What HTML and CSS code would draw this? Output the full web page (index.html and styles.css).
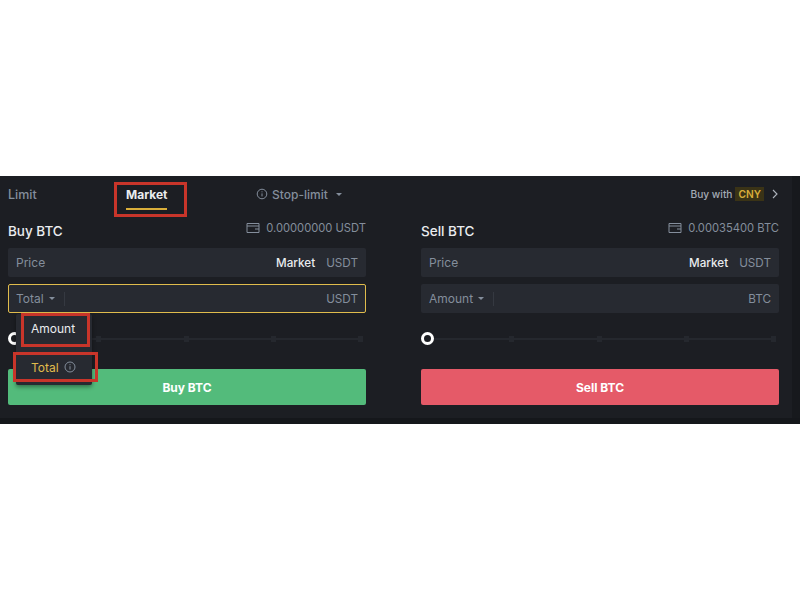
FILE: index.html
```html
<!DOCTYPE html>
<html lang="en">
<head>
<meta charset="utf-8">
<title>Spot trade</title>
<link rel="stylesheet" href="styles.css">
</head>
<body>
<main class="panel">
  <nav class="tabs">
    <span class="tab tab-limit">Limit</span>
    <span class="tab tab-market">Market<i class="underline"></i><i class="mark mark-market"></i></span>
    <span class="tab tab-stop">
      <svg class="icon" width="12" height="12" viewBox="0 0 12 12"><circle cx="6" cy="6" r="4.8" fill="none" stroke="#848e9c"/><path d="M6 3.4v.9M6 5.4v3" stroke="#848e9c"/></svg>
      Stop-limit<i class="caret"></i>
    </span>
    <span class="buywith">Buy with <b class="cny">CNY</b>
      <svg width="8" height="10" viewBox="0 0 8 10"><path d="M2 1l4 4-4 4" fill="none" stroke="#aeb4bc" stroke-width="1.1"/></svg>
    </span>
  </nav>
  <div class="columns">
    <section class="col">
      <header class="col-head">
        <h2>Buy BTC</h2>
        <span class="balance">
          <svg class="wallet" width="14" height="12" viewBox="0 0 14 12"><path d="M1 1.5h12v9H1zM1 4h12M9 7h4" fill="none" stroke="#848e9c"/></svg>
          0.00000000 USDT
        </span>
      </header>
      <div class="field"><span>Price</span><span class="right"><b>Market</b>USDT</span></div>
      <div class="field active"><span class="select">Total<i class="caret"></i></span><i class="sep"></i><span class="right">USDT</span></div>
      <div class="slider"><span class="track"><i></i><i></i><i></i><i></i></span><i class="knob"></i></div>
      <button class="btn buy">Buy BTC</button>
      <div class="menu">
        <div class="menu-item item-amount">Amount</div>
        <div class="menu-item item-total">Total
          <svg width="12" height="12" viewBox="0 0 12 12"><circle cx="6" cy="6" r="5" fill="none" stroke="#848e9c"/><path d="M6 3.2v1M6 5.2v3.4" stroke="#848e9c"/></svg>
        </div>
      </div>
      <i class="mark mark-amount"></i>
      <i class="mark mark-total"></i>
    </section>
    <section class="col">
      <header class="col-head">
        <h2>Sell BTC</h2>
        <span class="balance">
          <svg class="wallet" width="14" height="12" viewBox="0 0 14 12"><path d="M1 1.5h12v9H1zM1 4h12M9 7h4" fill="none" stroke="#848e9c"/></svg>
          0.00035400 BTC
        </span>
      </header>
      <div class="field"><span>Price</span><span class="right"><b>Market</b>USDT</span></div>
      <div class="field"><span class="select">Amount<i class="caret"></i></span><i class="sep"></i><span class="right">BTC</span></div>
      <div class="slider"><span class="track"><i></i><i></i><i></i><i></i></span><i class="knob"></i></div>
      <button class="btn sell">Sell BTC</button>
    </section>
  </div>
</main>
</body>
</html>
```
FILE: styles.css
```css
* { box-sizing: border-box; }
html, body { margin: 0; padding: 0; background: #fff; }
body { height: 600px; padding-top: 176px; font-family: Inter, "Liberation Sans", sans-serif; color: #848e9c; }
i { display: block; font-style: normal; }
.panel { height: 248px; background: #1c1e23; padding: 0 21px 0 8px; border-bottom: 6px solid #15171b; box-shadow: inset -8px 0 0 #17191d; }
.tabs { height: 36px; display: flex; align-items: center; font-size: 12px; font-weight: 500; }
.tab-limit { width: 118px; font-size: 12.5px; }
.tab-market { color: #eaecef; font-weight: 700; width: 130px; position: relative; }
.underline { position: absolute; left: 0; top: 21px; width: 41px; height: 2px; background: #d9ae3a; }
.tab-stop { display: flex; align-items: center; gap: 4px; }
.tab-stop .caret { margin-left: 4px; }
.caret { width: 0; height: 0; border: 3px solid transparent; border-top: 3px solid #848e9c; border-bottom: 0; display: inline-block; }
.buywith { margin-left: auto; font-size: 10.2px; color: #a4abb5; display: flex; align-items: center; gap: 3px; }
.cny { background: #3a3316; color: #d9ae3a; font-weight: 600; padding: 1px 3px; margin-right: 4px; }
.columns { display: grid; grid-template-columns: 358px 358px; column-gap: 55px; }
.col { position: relative; }
.col-head { height: 36px; display: flex; justify-content: space-between; }
h2 { margin: 9px 0 0; font-size: 13.5px; line-height: 20px; font-weight: 500; color: #eaecef; }
.balance { font-size: 11.2px; display: flex; align-items: flex-start; gap: 6px; line-height: 14px; padding-top: 9px; }
.wallet { margin-top: 1px; }
.field { height: 29px; margin-bottom: 7px; background: #272a31; border-radius: 2px; padding: 0 8px; display: flex; align-items: center; font-size: 12px; }
.right { margin-left: auto; display: flex; gap: 11px; font-size: 11.7px; }
.right b { color: #eaecef; font-weight: 500; }
.field.active { border: 1px solid #e0bc4c; padding: 0 7px; }
.select { display: flex; align-items: center; gap: 5px; }
.sep { width: 1px; height: 14px; background: #353941; margin-left: 9px; }
.slider { height: 49px; position: relative; }
.knob { position: absolute; left: 0; top: 12px; width: 13px; height: 13px; border-radius: 50%; background: #1c1e23; border: 3px solid #fff; }
.track { position: absolute; left: 6px; right: 3px; top: 18px; height: 2px; background: #25282e; display: grid; grid-template-columns: repeat(4, 1fr); }
.track i { width: 5px; height: 6px; margin-top: -2px; justify-self: end; background: #25282e; }
.btn { display: block; width: 100%; height: 36px; border: 0; border-radius: 2px; color: #fff; font: 700 12px Inter, "Liberation Sans", sans-serif; }
.buy { background: #53bb7b; }
.sell { background: #e55a68; }
.menu { position: absolute; left: 8px; top: 102px; width: 76px; background: #272a31; border-radius: 2px; font-size: 12px; box-shadow: 0 2px 4px rgba(0,0,0,.4); z-index: 2; }
.menu-item { display: flex; align-items: center; gap: 5px; padding-left: 15px; color: #eaecef; }
.item-amount { height: 28px; }
.item-total { height: 43px; padding-top: 7px; color: #e0bc4c; }
.mark { position: absolute; border: 3px solid #c8352a; z-index: 3; }
.mark-market { left: -12px; top: -5px; width: 73px; height: 35px; }
.mark-amount { left: 13px; top: 101px; width: 69px; height: 34px; }
.mark-total { left: 5px; top: 140px; width: 85px; height: 30px; }
```
